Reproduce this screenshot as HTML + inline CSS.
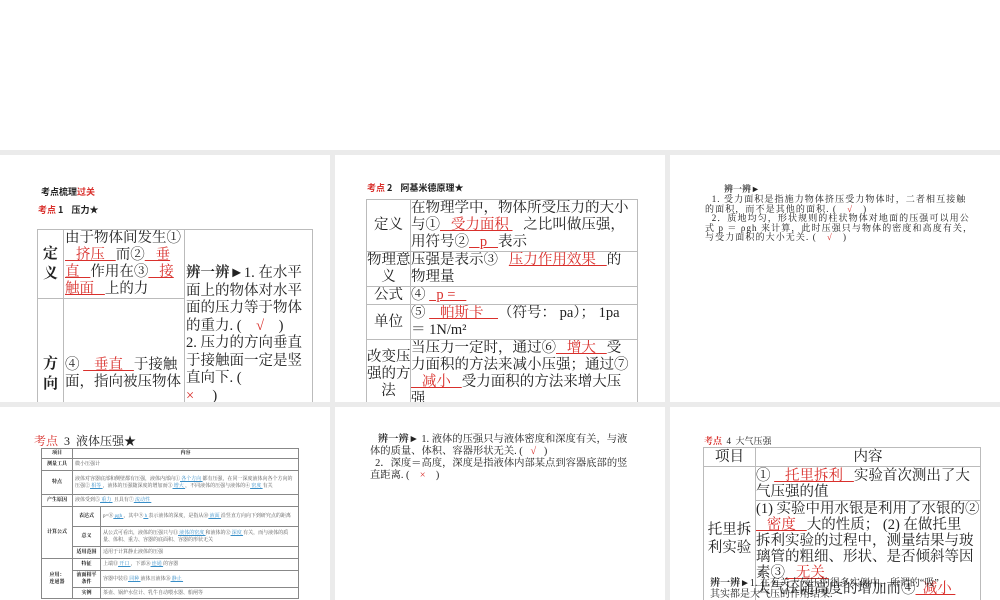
<!DOCTYPE html>
<html><head><meta charset="utf-8"><style>
*{margin:0;padding:0;box-sizing:border-box}
body{width:1000px;height:600px;overflow:hidden;background:#fff;position:relative;font-family:"Liberation Serif","Noto Serif CJK SC","Noto Sans CJK SC",serif;color:#222}
.bg{position:absolute;left:0;top:150px;width:1000px;height:450px;background:#ebebeb}
.s{position:absolute;background:#fff;overflow:hidden}
.a{position:absolute}
.r{color:#d9302c}
.u{color:#d9302c;text-decoration:underline;text-decoration-color:#d9302c}
.b{color:#3a8fc8;text-decoration:underline}
table{border-collapse:collapse;position:absolute;table-layout:fixed}
td{border:1px solid #bbb;vertical-align:middle;overflow:hidden;padding:0}
.nw td{white-space:nowrap}
.t4 td{border:1px solid #888;font-size:5px;line-height:7px;padding:0 2px;color:#555}
.t4 td.h{font-weight:bold;text-align:center;color:#111}
</style></head><body>
<div class="bg"></div>

<!-- slide 1 -->
<div class="s" style="left:0;top:155px;width:330px;height:247px">
 <div class="a" style="left:41px;top:30px;font-size:9px;font-weight:bold;font-family:'Noto Sans CJK SC',sans-serif">考点梳理<span class="r">过关</span></div>
 <div class="a" style="left:38px;top:48px;font-size:9px;font-weight:bold;font-family:'Noto Sans CJK SC',sans-serif"><span class="r">考点</span> 1 &nbsp;&nbsp; 压力★</div>
 <table class="nw" style="left:37px;top:74px;width:275px;font-size:14.5px;line-height:17px">
  <col style="width:26px"><col style="width:121px"><col style="width:128px">
  <tr style="height:68px"><td style="text-align:center;font-weight:bold;line-height:20px;font-size:15px">定<br>义</td><td style="padding-left:1px">由于物体间发生①<br><span class="u">&nbsp;&nbsp;&nbsp;挤压&nbsp;&nbsp;&nbsp;</span>而②<span class="u">&nbsp;&nbsp;&nbsp;垂</span><br><span class="u">直&nbsp;&nbsp;&nbsp;</span>作用在③<span class="u">&nbsp;&nbsp;&nbsp;接</span><br><span class="u">触面&nbsp;&nbsp;&nbsp;</span>上的力</td><td rowspan="2" style="padding-left:1px;vertical-align:top;padding-top:35px;line-height:17.5px"><b>辨一辨►</b>1. 在水平<br>面上的物体对水平<br>面的压力等于物体<br>的重力. ( &nbsp;&nbsp;&nbsp;<span class="r">√</span>&nbsp;&nbsp;&nbsp; )<br>2. 压力的方向垂直<br>于接触面一定是竖<br>直向下. (<br><span class="r">×</span>&nbsp;&nbsp;&nbsp;&nbsp;&nbsp;)</td></tr>
  <tr style="height:110px"><td style="text-align:center;font-weight:bold;padding-top:40px;line-height:20px;font-size:15px">方<br>向</td><td style="padding-left:1px;padding-top:40px">④ <span class="u">&nbsp;&nbsp;&nbsp;垂直&nbsp;&nbsp;&nbsp;</span>于接触<br>面，指向被压物体</td></tr>
 </table>
</div>

<!-- slide 2 -->
<div class="s" style="left:335px;top:155px;width:330px;height:247px">
 <div class="a" style="left:32px;top:26px;font-size:9px;font-weight:bold;font-family:'Noto Sans CJK SC',sans-serif"><span class="r">考点</span> 2 &nbsp;&nbsp; 阿基米德原理★</div>
 <table class="nw" style="left:31px;top:44px;width:271px;font-size:14.5px;line-height:17px">
  <col style="width:44px"><col style="width:227px">
  <tr style="height:52px"><td style="text-align:center">定义</td><td>在物理学中，物体所受压力的大小<br>与①<span class="u">&nbsp;&nbsp;&nbsp;受力面积&nbsp;</span>&nbsp;&nbsp; 之比叫做压强，<br>用符号②<span class="u">&nbsp;&nbsp;&nbsp;p&nbsp;&nbsp;&nbsp;</span>表示</td></tr>
  <tr style="height:34px"><td style="text-align:center">物理意<br>义</td><td>压强是表示③ &nbsp;&nbsp;<span class="u">压力作用效果&nbsp;&nbsp;&nbsp;</span>的<br>物理量</td></tr>
  <tr style="height:17px"><td style="text-align:center">公式</td><td>④ <span class="u">&nbsp;&nbsp;p = &nbsp;&nbsp;</span></td></tr>
  <tr style="height:34px"><td style="text-align:center">单位</td><td>⑤ <span class="u">&nbsp;&nbsp;&nbsp;帕斯卡&nbsp;&nbsp;&nbsp;&nbsp;</span>（符号： pa）； 1pa<br>＝ 1N/m²</td></tr>
  <tr style="height:70px"><td style="text-align:center">改变压<br>强的方<br>法</td><td style="vertical-align:top">当压力一定时，通过⑥<span class="u">&nbsp;&nbsp;&nbsp;增大&nbsp;&nbsp;&nbsp;</span>受<br>力面积的方法来减小压强；通过⑦<br><span class="u">&nbsp;&nbsp;&nbsp;减小&nbsp;&nbsp;&nbsp;</span>受力面积的方法来增大压<br>强</td></tr>
 </table>
</div>

<!-- slide 3 -->
<div class="s" style="left:670px;top:155px;width:330px;height:247px">
 <div class="a" style="left:54px;top:27px;font-size:9px;font-weight:bold">辨一辨►</div>
 <div class="a" style="left:35px;top:40px;width:290px;font-size:9px;letter-spacing:1.1px;line-height:9.5px;white-space:nowrap">&nbsp;&nbsp;1. 受力面积是指施力物体挤压受力物体时，二者相互接触<br>的面积，而不是其他的面积. ( &nbsp;&nbsp;<span class="r">√</span>&nbsp;&nbsp; )<br>&nbsp;&nbsp;2．质地均匀，形状规则的柱状物体对地面的压强可以用公<br>式 p ＝ ρgh 来计算，此时压强只与物体的密度和高度有关，<br>与受力面积的大小无关. ( &nbsp;&nbsp;<span class="r">√</span>&nbsp;&nbsp; )</div>
</div>

<!-- slide 4 -->
<div class="s" style="left:0;top:407px;width:330px;height:193px">
 <div class="a" style="left:34px;top:25px;font-size:12px"><span class="r">考点</span> &nbsp;3 &nbsp;液体压强★</div>
 <table class="t4" style="left:41px;top:41px;width:258px">
  <col style="width:31px"><col style="width:28px"><col>
  <tr style="height:10px"><td class="h">项目</td><td class="h" colspan="2">内容</td></tr>
  <tr style="height:12px"><td class="h">测量工具</td><td colspan="2">微小压强计</td></tr>
  <tr style="height:24px"><td class="h">特点</td><td colspan="2">液体对容器底部和侧壁都有压强，液体内部向①<span class="b">&nbsp;各个方向&nbsp;</span>都有压强，在同一深度液体向各个方向的压强②<span class="b">&nbsp;相等&nbsp;</span>，液体的压强随深度的增加而③<span class="b">&nbsp;增大&nbsp;</span>，不同液体的压强与液体的④<span class="b">&nbsp;密度&nbsp;</span>有关</td></tr>
  <tr style="height:12px"><td class="h">产生原因</td><td colspan="2">液体受到⑤<span class="b">&nbsp;重力&nbsp;</span> 且具有⑦<span class="b">&nbsp;流动性&nbsp;</span></td></tr>
  <tr style="height:20px"><td class="h" rowspan="3">计算公式</td><td class="h">表达式</td><td>p=⑧<span class="b">&nbsp;ρgh&nbsp;</span>，其中⑨<span class="b">&nbsp;h&nbsp;</span>表示液体的深度，是指从⑩<span class="b">&nbsp;液面&nbsp;</span>沿竖直方向向下到研究点的距离</td></tr>
  <tr style="height:20px"><td class="h">意义</td><td>从公式可看出，液体的压强只与⑪<span class="b">&nbsp;液体的密度&nbsp;</span>和液体的⑫<span class="b">&nbsp;深度&nbsp;</span>有关，而与液体的质量、体积、重力、容器的底面积、容器的形状无关</td></tr>
  <tr style="height:12px"><td class="h">适用范围</td><td>适用于计算静止液体的压强</td></tr>
  <tr style="height:12px"><td class="h" rowspan="3">应用：<br>连通器</td><td class="h">特征</td><td>上端⑬<span class="b">&nbsp;开口&nbsp;</span>，下部⑭<span class="b">&nbsp;连通&nbsp;</span>的容器</td></tr>
  <tr style="height:17px"><td class="h">液面相平条件</td><td>容器中装⑮<span class="b">&nbsp;同种&nbsp;</span>液体且液体⑯<span class="b">&nbsp;静止&nbsp;</span></td></tr>
  <tr style="height:11px"><td class="h">实例</td><td>茶壶、锅炉水位计、乳牛自动喂水器、船闸等</td></tr>
 </table>
</div>

<!-- slide 5 -->
<div class="s" style="left:335px;top:407px;width:330px;height:193px">
 <div class="a" style="left:35px;top:27px;width:290px;font-size:10.3px;line-height:12px;white-space:nowrap">&nbsp;&nbsp;&nbsp;<b>辨一辨►</b> 1. 液体的压强只与液体密度和深度有关，与液<br>体的质量、体积、容器形状无关. ( &nbsp;&nbsp;<span class="r">√</span>&nbsp;&nbsp; )<br>&nbsp;&nbsp;2．深度＝高度，深度是指液体内部某点到容器底部的竖<br>直距离. ( &nbsp;&nbsp;&nbsp;<span class="r">×</span>&nbsp;&nbsp;&nbsp; )</div>
</div>

<!-- slide 6 -->
<div class="s" style="left:670px;top:407px;width:330px;height:193px">
 <div class="a" style="left:34px;top:27px;font-size:9px"><span class="r" style="font-weight:bold">考点</span> &nbsp;4 &nbsp;大气压强</div>
 <table class="nw" style="left:33px;top:40px;width:277px;font-size:14.5px;line-height:16px">
  <col style="width:52px"><col style="width:225px">
  <tr style="height:19px"><td style="text-align:center">项目</td><td style="text-align:center">内容</td></tr>
  <tr style="height:34px"><td rowspan="2" style="text-align:center;line-height:18px">托里拆<br>利实验</td><td>① <span class="u">&nbsp;&nbsp;&nbsp;托里拆利&nbsp;&nbsp;&nbsp;</span>实验首次测出了大<br>气压强的值</td></tr>
  <tr style="height:110px"><td style="vertical-align:top">(1) 实验中用水银是利用了水银的②<br><span class="u">&nbsp;&nbsp;&nbsp;密度&nbsp;&nbsp;&nbsp;</span>大的性质； (2) 在做托里<br>拆利实验的过程中，测量结果与玻<br>璃管的粗细、形状、是否倾斜等因<br>素③<span class="u">&nbsp;&nbsp;&nbsp;无关&nbsp;</span><br>大气压随高度的增加而④<span class="u">&nbsp;&nbsp;减小&nbsp;</span></td></tr>
 </table>
 <div class="a" style="left:40px;top:171px;font-size:10px;line-height:11px;width:290px;white-space:nowrap"><b>辨一辨►</b>1. 在有关大气压的很多实例中，所谓的“吸”<br>其实都是大气压的作用结果.</div>
</div>
</body></html>
